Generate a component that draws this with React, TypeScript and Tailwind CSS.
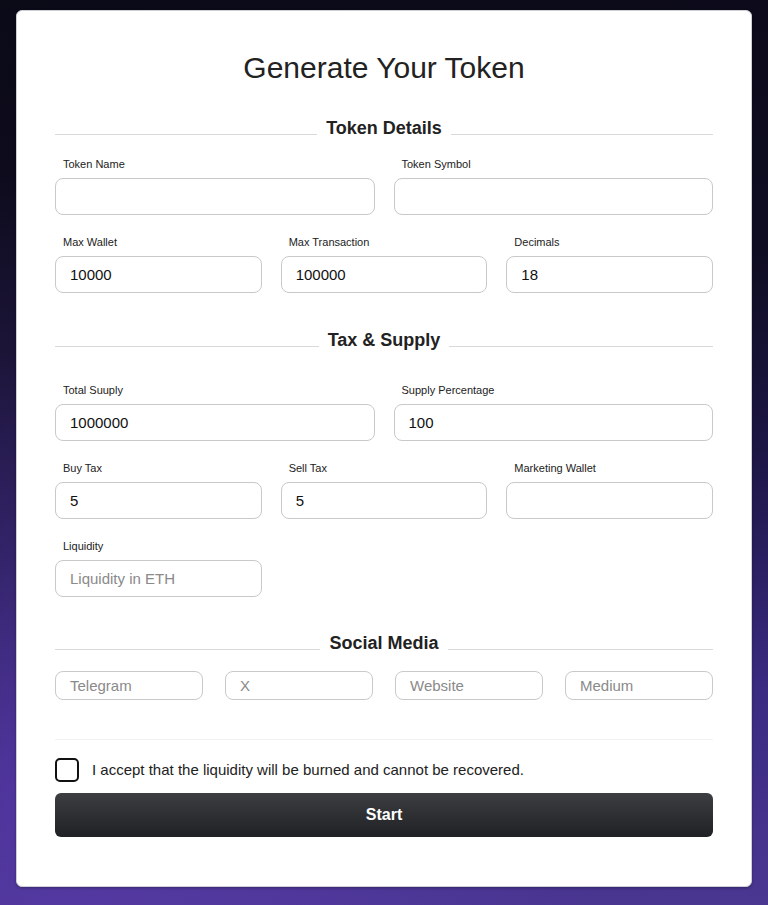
import React from "react";

function SectionHeader({ title, className = "" }: { title: string; className?: string }) {
  return (
    <div className={`flex items-end gap-[9px] h-[22px] ${className}`}>
      <div className="flex-1 h-px bg-[#d9d9d9] mb-[4px]" />
      <div className="text-[18px] leading-[22px] font-bold text-[#222]">{title}</div>
      <div className="flex-1 h-px bg-[#d9d9d9] mb-[4px]" />
    </div>
  );
}

function Field({ label, value, placeholder }: { label: string; value?: string; placeholder?: string }) {
  return (
    <div className="flex flex-col">
      <label className="pl-[8px] text-[11px] leading-[16px] text-[#222] mb-[6px]">{label}</label>
      <input
        readOnly
        defaultValue={value}
        placeholder={placeholder}
        className="h-[37px] w-full rounded-[8px] border border-[#c9c9c9] bg-white px-[14px] text-[15px] text-[#111] placeholder:text-[#8a8a8a] outline-none"
      />
    </div>
  );
}

function SmallInput({ placeholder }: { placeholder: string }) {
  return (
    <input
      readOnly
      placeholder={placeholder}
      className="h-[29px] w-full rounded-[8px] border border-[#c9c9c9] bg-white px-[14px] text-[15px] text-[#111] placeholder:text-[#8a8a8a] outline-none"
    />
  );
}

export default function App() {
  return (
    <div
      className="min-h-[905px] w-full bg-[radial-gradient(ellipse_at_10%_85%,rgba(110,70,200,0.45)_0%,rgba(110,70,200,0)_55%),linear-gradient(172deg,#0b0a17_0%,#0f0d22_35%,#1c1645_55%,#3a2a80_78%,#4a3792_100%)] px-[16px] pt-[10px] pb-[18px]"
      style={{ fontFamily: '"Liberation Sans", Arial, sans-serif' }}
    >
      <div className="rounded-[6px] border border-[#cfcfd6] bg-white px-[38px] pt-[39px] pb-[49px] shadow-[0_1px_3px_rgba(0,0,0,0.3)]">
        <h1 className="text-center text-[30px] leading-[36px] font-normal text-[#222]">Generate Your Token</h1>

        <SectionHeader title="Token Details" className="mt-[31px]" />

        <div className="mt-[17px] grid grid-cols-2 gap-x-[19px]">
          <Field label="Token Name" />
          <Field label="Token Symbol" />
        </div>
        <div className="mt-[19px] grid grid-cols-3 gap-x-[19px]">
          <Field label="Max Wallet" value="10000" />
          <Field label="Max Transaction" value="100000" />
          <Field label="Decimals" value="18" />
        </div>

        <SectionHeader title="Tax & Supply" className="mt-[36px]" />

        <div className="mt-[31px] grid grid-cols-2 gap-x-[19px]">
          <Field label="Total Suuply" value="1000000" />
          <Field label="Supply Percentage" value="100" />
        </div>
        <div className="mt-[19px] grid grid-cols-3 gap-x-[19px]">
          <Field label="Buy Tax" value="5" />
          <Field label="Sell Tax" value="5" />
          <Field label="Marketing Wallet" />
        </div>
        <div className="mt-[19px] grid grid-cols-3 gap-x-[19px]">
          <Field label="Liquidity" placeholder="Liquidity in ETH" />
        </div>

        <SectionHeader title="Social Media" className="mt-[35px]" />

        <div className="mt-[17px] grid grid-cols-4 gap-x-[22px]">
          <SmallInput placeholder="Telegram" />
          <SmallInput placeholder="X" />
          <SmallInput placeholder="Website" />
          <SmallInput placeholder="Medium" />
        </div>

        <div className="mt-[39px] h-px bg-[#f1f1f1]" />

        <div className="mt-[18px] flex items-center gap-[13px]">
          <div className="h-[24px] w-[24px] rounded-[5px] border-2 border-[#111] bg-white" />
          <span className="text-[15px] leading-[20px] text-[#222]">
            I accept that the liquidity will be burned and cannot be recovered.
          </span>
        </div>

        <button className="mt-[11px] flex h-[44px] w-full items-center justify-center rounded-[6px] bg-[linear-gradient(180deg,#3d3e41_0%,#1f2125_100%)] text-[16px] font-bold text-white">
          Start
        </button>
      </div>
    </div>
  );
}
